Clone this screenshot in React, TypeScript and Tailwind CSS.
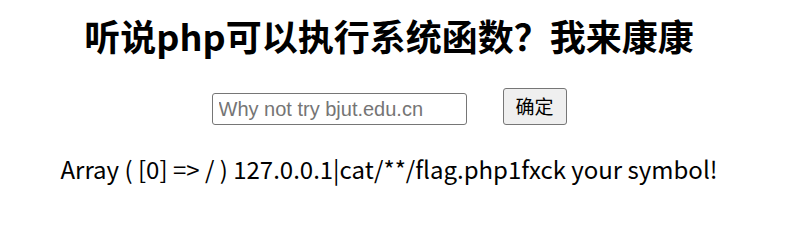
export default function App() {
  return (
    <div className="w-[778px] bg-white text-black font-['Noto_Sans_CJK_SC','Noto_Sans',sans-serif]">
      <h1 className="pt-[8px] text-center text-[36px] leading-[54px] font-bold">
        听说php可以执行系统函数？我来康康
      </h1>
      <form className="mt-[26px] flex items-end justify-center gap-[36px]" onSubmit={(e) => e.preventDefault()}>
        <input
          type="text"
          placeholder="Why not try bjut.edu.cn"
          className="w-[255px] h-[32px] rounded-[3px] border border-[#767676] px-[6px] text-[20px] font-['Liberation_Sans',Arial,sans-serif] placeholder:text-[#757575] outline-none"
        />
        <button
          type="submit"
          className="w-[64px] h-[37px] rounded-[3px] border border-[#767676] bg-[#efefef] text-[19px] font-['Noto_Sans_CJK_SC',sans-serif]"
        >
          确定
        </button>
      </form>
      <p className="mt-[26px] text-center text-[24px] leading-[36px]">
        Array ( [0] =&gt; / ) 127.0.0.1|cat/**/flag.php1fxck your symbol!
      </p>
    </div>
  )
}
